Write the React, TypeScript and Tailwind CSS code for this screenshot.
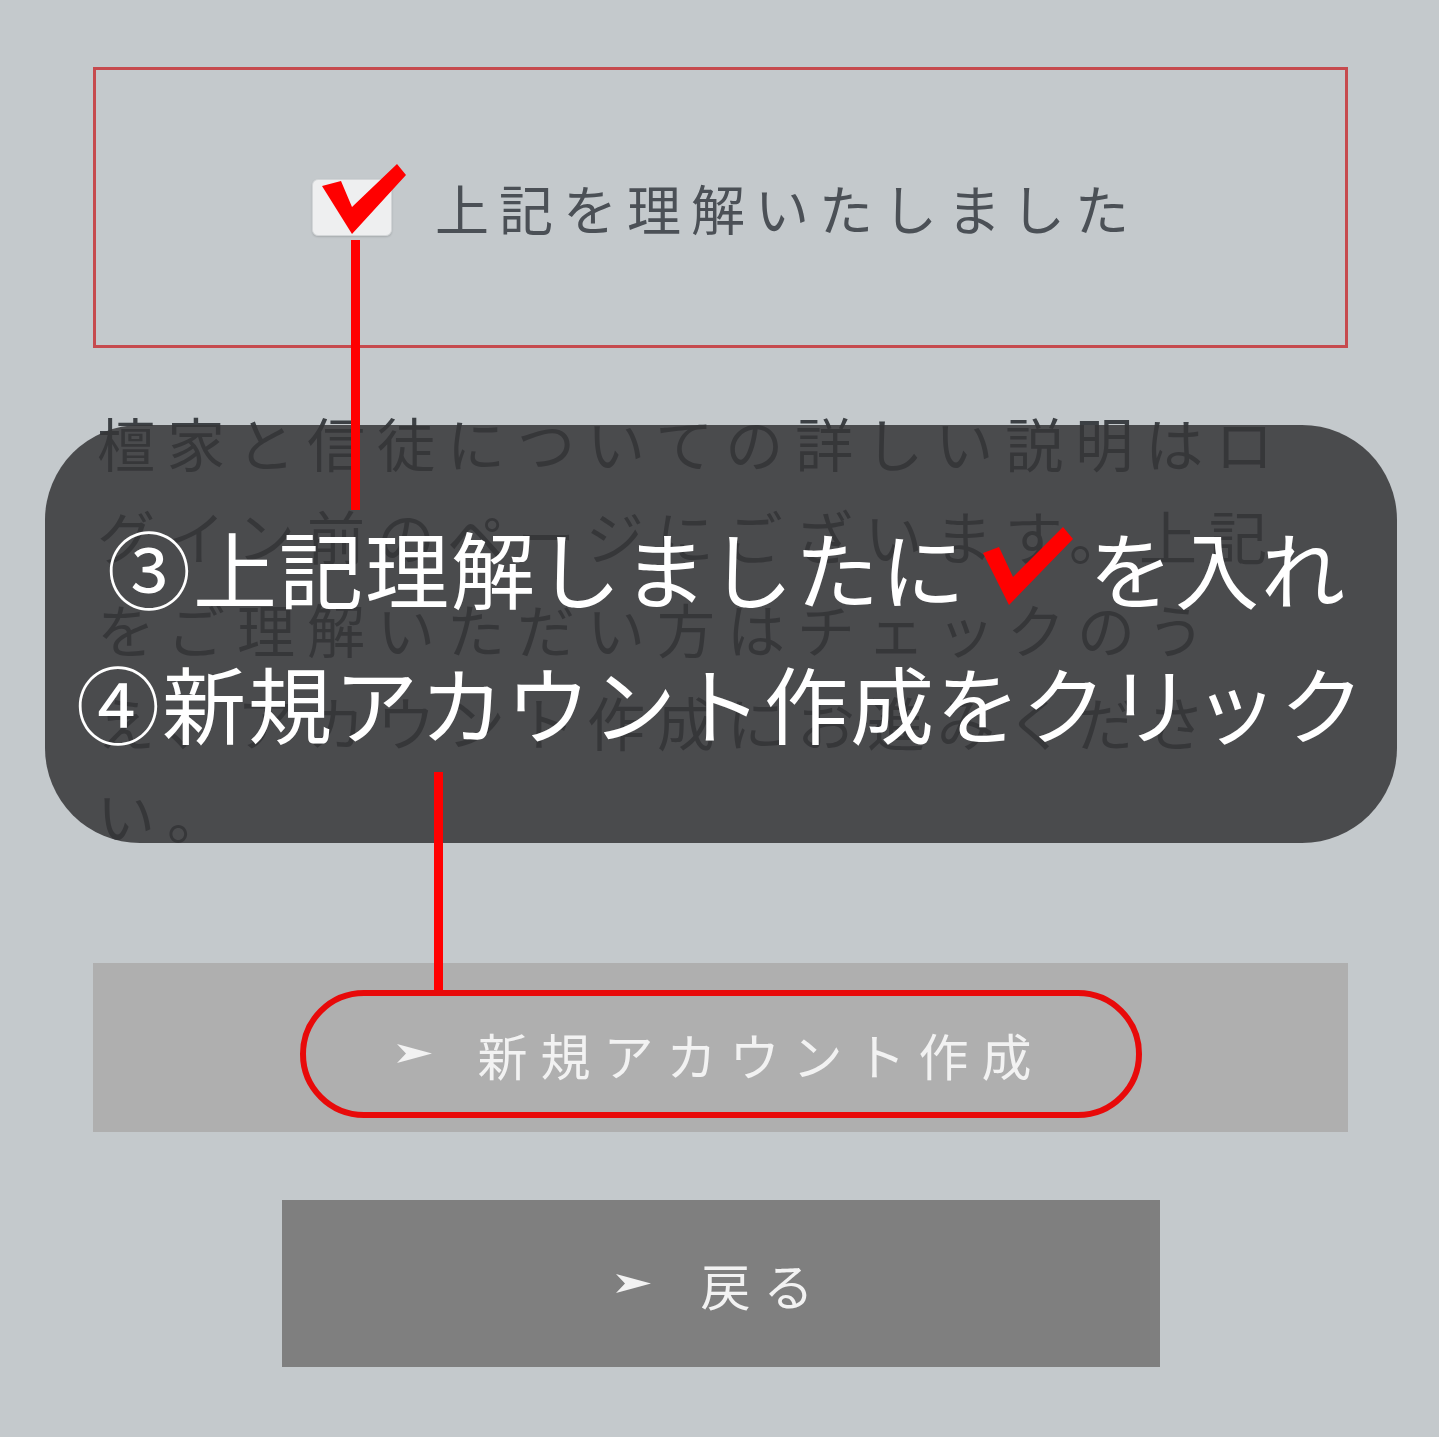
const Arrow = () => (
  <svg width="35" height="19" viewBox="0 0 35 19" className="shrink-0">
    <path d="M0 0 L35 9.5 L0 19 L9 9.5 Z" fill="#f2f2f2" />
  </svg>
);

const paragraph = [
  '檀家と信徒についての詳しい説明はロ',
  'グイン前のページにございます。上記',
  'をご理解いただい方はチェックのう',
  'え、アカウント作成にお進みくださ',
  'い。',
];

export default function App() {
  return (
    <div className="relative w-[1439px] h-[1437px] overflow-hidden bg-[#c4c9cc] font-['Noto_Sans_CJK_JP','Noto_Sans',sans-serif]">
      <div className="flex flex-col pl-[93px] pr-[91px] pt-[67px]">
        {/* agreement box */}
        <div className="h-[281px] border-[3px] border-[#c64a4e] flex items-center justify-center gap-[43px] pl-[10px]">
          <div className="w-[80px] h-[57px] rounded-[6px] bg-[#eeeff0] border border-[#d3d6d8] shadow-[0_1px_2px_rgba(0,0,0,0.15)]" />
          <span className="text-[54px] leading-none tracking-[10px] text-[#4b5056]">上記を理解いたしました</span>
        </div>

        <div className="mt-[48px] pl-[4px] text-[58px] leading-[93px] tracking-[12px] text-[#3c4044]">
          {paragraph.map((line) => (
            <div key={line} className="whitespace-nowrap">
              {line}
            </div>
          ))}
        </div>

        {/* create account */}
        <div className="mt-[102px] h-[169px] bg-[#afafaf] flex items-center justify-center">
          <div className="mt-[12px] w-[842px] h-[128px] rounded-full border-[6px] border-[#e80a0a] flex items-center justify-center gap-[46px]">
            <Arrow />
            <span className="text-[50px] leading-none tracking-[13px] text-[#f2f2f2]">新規アカウント作成</span>
          </div>
        </div>

        {/* back */}
        <div className="mt-[68px] ml-[189px] w-[878px] h-[167px] bg-[#7f7f7f] flex items-center justify-center gap-[50px]">
          <Arrow />
          <span className="text-[50px] leading-none tracking-[13px] text-[#f2f2f2]">戻る</span>
        </div>
      </div>

      {/* annotation: dark callout */}
      <div className="absolute left-[45px] top-[425px] w-[1352px] h-[418px] rounded-[95px] bg-[rgba(54,54,56,0.86)] flex flex-col items-center justify-center text-white text-[84px] leading-[135px] tracking-[2px]">
        <div className="flex items-center whitespace-nowrap pl-[12px]">
          <span>③上記理解しましたに</span>
          <svg width="122" height="80" viewBox="0 0 122 80" className="shrink-0">
            <path d="M16 26 L32 20 L46 50 L96 0 L106 12 L42 78 Z" fill="#ff0000" />
          </svg>
          <span>を入れ</span>
        </div>
        <div className="whitespace-nowrap">④新規アカウント作成をクリック</div>
      </div>

      {/* annotation: check on the checkbox */}
      <svg width="105" height="80" viewBox="0 0 105 80" className="absolute left-[310px] top-[160px]">
        <path d="M12 26 L31 21 L42 47 L87 4 L96 15 L42 74 Z" fill="#ff0000" />
      </svg>

      {/* annotation: leader lines */}
      <div className="absolute left-[351px] top-[240px] w-[9px] h-[270px] bg-[#ff0000]" />
      <div className="absolute left-[434px] top-[772px] w-[9px] h-[218px] bg-[#ff0000]" />
    </div>
  );
}
